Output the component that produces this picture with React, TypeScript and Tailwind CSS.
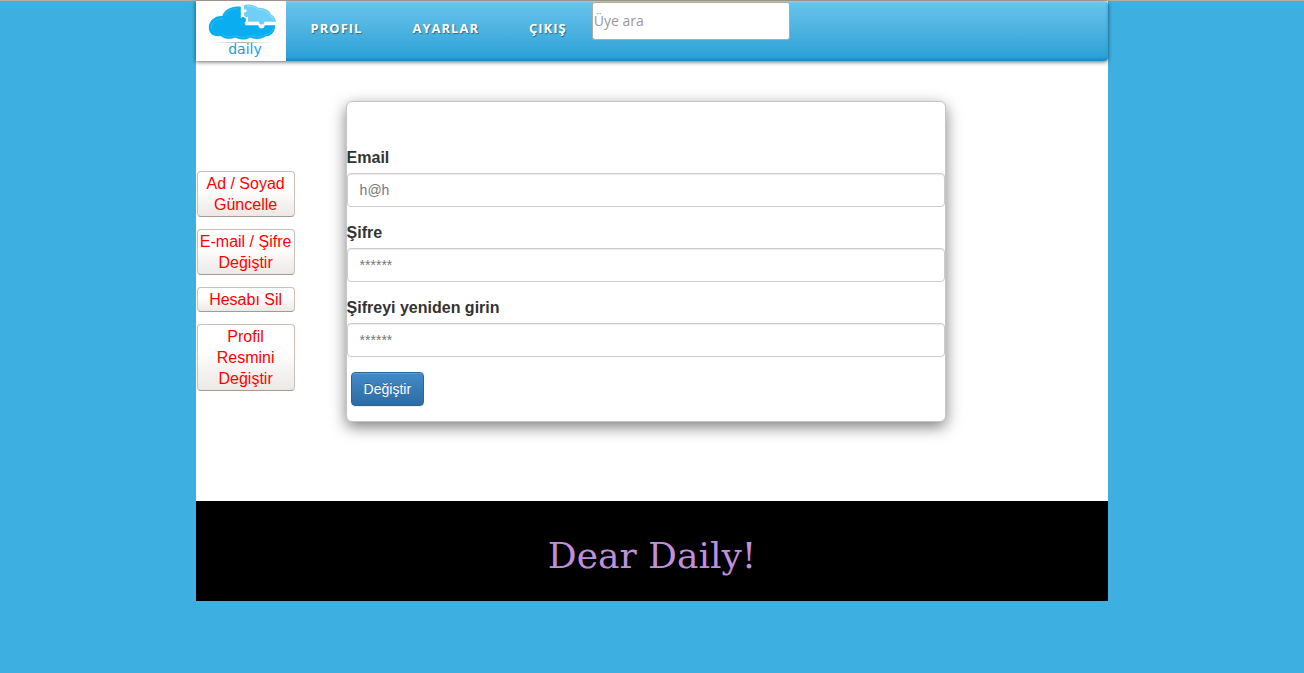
import React from "react";

const navItems = ["PROFIL", "AYARLAR", "ÇIKIŞ"];

const sideItems = [
  "Ad / Soyad Güncelle",
  "E-mail / Şifre Değiştir",
  "Hesabı Sil",
  "Profil Resmini Değiştir",
];

const fields = [
  { id: "email", label: "Email", type: "email", placeholder: "h@h" },
  { id: "password", label: "Şifre", type: "password", placeholder: "******" },
  { id: "password-again", label: "Şifreyi yeniden girin", type: "password", placeholder: "******" },
];

function Logo() {
  return (
    <svg viewBox="0 0 90 60" className="h-[60px] w-[90px]" role="img" aria-label="daily">
      <defs>
        <linearGradient id="rule" x1="0" x2="1" y1="0" y2="0">
          <stop offset="0" stopColor="#ccc" stopOpacity="0" />
          <stop offset="0.5" stopColor="#aaa" />
          <stop offset="1" stopColor="#ccc" stopOpacity="0" />
        </linearGradient>
      </defs>
      <path
        d="M44.800 5.800C37 4.500 28.500 8 26.300 15C19 14.500 12.800 19.500 12.800 26.500C12.800 33 18 36 24.500 35C29 38.500 35 38.500 39.500 36.500C45 39.500 51 39 54 36.500C60 39 66.500 38 69 35.500C75 35.500 79 31.500 79.200 24.300H68.500C69 28.500 62 28.500 62.500 24.300H49.500C49.500 23.500 49 22.500 48.500 21.500C50.500 20.500 50.500 16.500 47.500 16C46.500 16 45.500 16.500 44.800 17Z"
        fill="#08aeef"
      />
      <path
        d="M15.500 28C14.500 22 19 17.500 27.500 18M28.500 14.500C30.500 10 36 7.500 42 7.800M26 33.500C31 36.500 36 36 40 34.500C46 37 51 36.500 54.500 34.500C60 37 66 36 69 33.500C73 33.500 76 31.500 77 27.500"
        fill="none"
        stroke="#45c1f2"
        strokeWidth="0.7"
      />
      <path
        d="M48 4C53 2.500 59 4 62 6.800C69 6.500 74 10 75 13.500C78 15 79.800 17.500 80 20.800H68.300C69 24.500 62.500 24.500 63 20.800H52V16C49 16.500 47.500 14.500 48 12C48.500 11 49.500 10.800 50.500 11V8.500H48Z"
        fill="#70cff7"
      />
      <path
        d="M51 5.500C55 4.500 59 6 61.500 8.500C67.500 8 72 11 73.500 14.500C76 15.500 77.500 17 78 19"
        fill="none"
        stroke="#a9e2fa"
        strokeWidth="0.7"
      />
      <rect x="14" y="41" width="64" height="1" fill="url(#rule)" />
      <text x="49" y="53" textAnchor="middle" fontFamily="DejaVu Sans, sans-serif" fontSize="14" fill="#189fe0">
        daily
      </text>
    </svg>
  );
}

export default function App() {
  return (
    <div className="min-h-screen border-t border-[#b8aca2] bg-[#3db0e1] font-['Liberation_Sans',sans-serif] text-[#333]">
      <div className="mx-auto w-[70%] bg-white">
        <header className="flex h-[60px] items-start rounded-r-[4px] bg-linear-to-b from-[#69c5ea] to-[#259fd6] shadow-[0_1px_4px_rgba(0,0,0,0.6),inset_0_1px_2px_rgba(255,255,255,0.25),inset_0_-2px_3px_#168abd]">
          <a href="#" className="shrink-0 bg-white">
            <Logo />
          </a>
          <nav className="flex h-full items-center font-['Open_Sans',sans-serif] text-[13px] font-bold tracking-[1px] text-white">
            {navItems.map((item) => (
              <a
                key={item}
                href="#"
                className="px-[25px] pb-1 [text-shadow:1px_1px_1px_rgba(0,0,0,0.4)]"
              >
                {item}
              </a>
            ))}
          </nav>
          <input
            type="search"
            aria-label="Üye ara"
            placeholder="Üye ara"
            className="mt-px h-[38px] w-[198px] rounded-[3px] border border-[#b5aaa0] bg-white px-px pb-[2px] font-['Open_Sans',sans-serif] text-[14px] placeholder:text-[#999]"
          />
        </header>

        <main className="flex items-start pb-[79px]">
          <aside className="mt-[110px] ml-px flex w-[98px] shrink-0 flex-col gap-3">
            {sideItems.map((item) => (
              <button
                key={item}
                type="button"
                className="rounded-[4px] border border-[#c9c1b9] border-b-[#a39a91] bg-linear-to-b from-white from-40% to-[#ece8e5] py-px text-[16px] leading-[21px] text-[#f00]"
              >
                {item}
              </button>
            ))}
          </aside>

          <form className="mt-10 mr-4 ml-[51px] w-full max-w-[600px] rounded-[6px] border border-[#c5c5c5] bg-white pt-[45px] pb-[15px] shadow-[0_5px_15px_rgba(0,0,0,0.5)]">
            {fields.map((field) => (
              <div key={field.id} className="mb-[15px] flex flex-col gap-[5px]">
                <label htmlFor={field.id} className="text-[16px] leading-[21px] font-bold">
                  {field.label}
                </label>
                <input
                  id={field.id}
                  type={field.type}
                  placeholder={field.placeholder}
                  className="h-[34px] w-full rounded-[4px] border border-[#ccc] bg-white px-3 text-[14px] shadow-[inset_0_1px_1px_rgba(0,0,0,0.075)] placeholder:text-[#777]"
                />
              </div>
            ))}
            <button
              type="submit"
              className="ml-1 block h-[34px] rounded-[4px] border border-[#2b669a] bg-linear-to-b from-[#428bca] to-[#2d6ca2] px-3 text-[14px] text-white shadow-[inset_0_1px_0_rgba(255,255,255,0.15),0_1px_1px_rgba(0,0,0,0.075)] [text-shadow:0_-1px_0_rgba(0,0,0,0.2)]"
            >
              Değiştir
            </button>
          </form>
        </main>

        <footer className="flex h-[100px] items-center justify-center bg-black pt-[10px]">
          <p className="font-['DejaVu_Serif',serif] text-[36px] leading-[40px] text-[#c08fdb]">Dear Daily!</p>
        </footer>
      </div>
    </div>
  );
}
